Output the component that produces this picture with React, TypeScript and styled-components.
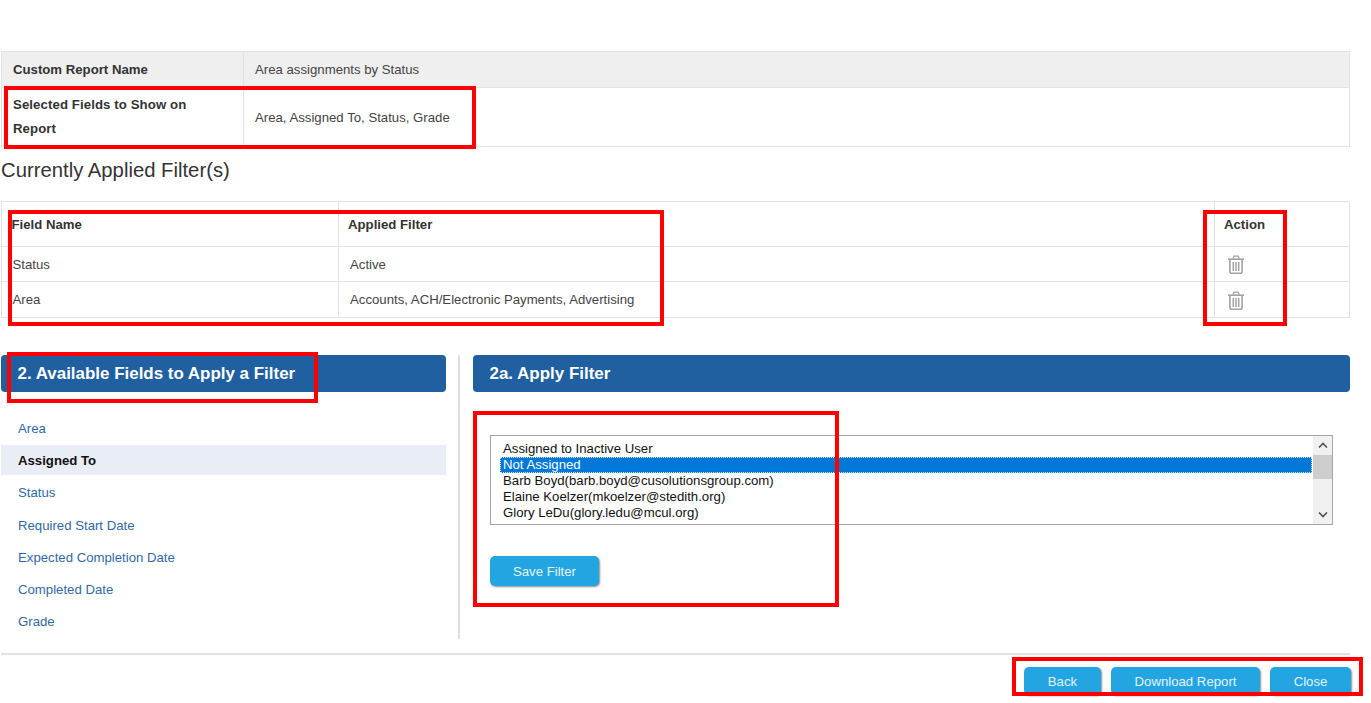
import React from 'react';
import styled, { createGlobalStyle } from 'styled-components';

const GlobalStyle = createGlobalStyle`
  html, body {
    margin: 0;
    padding: 0;
    background: #fff;
    font-family: "Liberation Sans", Arial, sans-serif;
    color: #333;
  }
`;

const Page = styled.div`
  position: relative;
  width: 1371px;
  height: 703px;
  overflow: hidden;
  box-sizing: border-box;
  padding: 51px 21px 0 1px;
`;

const Table = styled.table`
  width: 100%;
  border-collapse: collapse;
  table-layout: fixed;
  font-size: 13.2px;
  border: 1px solid #e3e3e3;
  color: #444;
`;

const Row = styled.tr<{ $height: number; $shaded?: boolean }>`
  height: ${(p) => p.$height}px;
  background: ${(p) => (p.$shaded ? '#efefef' : '#fff')};
`;

const Cell = styled.td<{ $pad?: number }>`
  border: 1px solid #e3e3e3;
  padding: 0 0 0 ${(p) => p.$pad ?? 11}px;
  vertical-align: middle;
`;

const LabelCell = styled(Cell)<{ $spaced?: boolean }>`
  font-weight: bold;
  color: #333;
  line-height: 24px;
  letter-spacing: ${(p) => (p.$spaced ? '0.1px' : 'normal')};
`;

const HeaderCell = styled(LabelCell)`
  padding-top: 1px;
`;

const Heading = styled.h2`
  margin: 0;
  height: 54px;
  padding-top: 10px;
  box-sizing: border-box;
  font-size: 20.3px;
  line-height: 27px;
  font-weight: normal;
  color: #333;
`;

const TrashButton = styled.button`
  display: block;
  margin: 2px 0 0;
  padding: 0;
  width: 20px;
  height: 20px;
  border: 0;
  background: none;
  color: #a3a3a3;
`;

const Columns = styled.div`
  display: grid;
  grid-template-columns: 445px 27px 1fr;
  margin-top: 37px;
  height: 284px;
`;

const Divider = styled.div`
  justify-self: center;
  width: 2px;
  margin-right: 1px;
  background: #e0e0e0;
`;

const PanelTitle = styled.div`
  height: 37px;
  box-sizing: border-box;
  padding-left: 16.5px;
  border-radius: 4px;
  background: #205fa0;
  color: #fff;
  font-size: 16.95px;
  font-weight: bold;
  line-height: 37px;
`;

const FieldList = styled.ul`
  list-style: none;
  margin: 21px 0 0;
  padding: 0;
`;

const FieldItem = styled.li<{ $active?: boolean }>`
  height: 30px;
  margin-bottom: 2.2px;
  padding-left: 17px;
  font-size: 13.2px;
  line-height: 31px;
  color: ${(p) => (p.$active ? '#111' : '#2f6aa8')};
  font-weight: ${(p) => (p.$active ? 'bold' : 'normal')};
  background: ${(p) => (p.$active ? '#e9edf5' : 'transparent')};
`;

const FilterBody = styled.div`
  padding: 43px 17px 0;
`;

const ListBox = styled.div`
  display: flex;
  height: 90px;
  box-sizing: border-box;
  border: 1px solid #a6a6a6;
  background: #fff;
`;

const Options = styled.div`
  flex: 1;
  padding: 5px 1px 0 9px;
  overflow: hidden;
`;

const Option = styled.div<{ $selected?: boolean }>`
  height: 16px;
  box-sizing: border-box;
  padding-left: 3px;
  font-size: 13.2px;
  line-height: 16px;
  color: ${(p) => (p.$selected ? '#fff' : '#111')};
  background: ${(p) => (p.$selected ? '#0078d7' : 'transparent')};
  outline: ${(p) => (p.$selected ? '1px dotted #cfe4f7' : 'none')};
  outline-offset: -1px;
`;

const ScrollTrack = styled.div`
  display: flex;
  flex-direction: column;
  width: 19px;
  background: #f0f0f0;
`;

const ScrollArrow = styled.div`
  flex: none;
  height: 19px;
  display: flex;
  align-items: center;
  justify-content: center;
  color: #505050;
`;

const ScrollThumb = styled.div`
  flex: none;
  height: 24px;
  background: #cdcdcd;
`;

const ScrollSpace = styled.div`
  flex: 1;
`;

const ActionButton = styled.button`
  height: 30px;
  box-sizing: border-box;
  padding: 0;
  border: 0;
  border-radius: 5px;
  background: #22a5e0;
  color: #e4f4fc;
  font-family: inherit;
  font-size: 13.2px;
  box-shadow: 1px 1px 2px rgba(0, 0, 0, 0.45);
`;

const SaveButton = styled(ActionButton)`
  display: block;
  width: 109px;
  margin-top: 31px;
`;

const Footer = styled.div`
  margin-top: 14px;
  border-top: 2px solid #e3e3e3;
  display: flex;
  justify-content: flex-end;
  gap: 10px;
  padding-top: 12px;
`;

const FooterButton = styled(ActionButton)<{ $width: number }>`
  width: ${(p) => p.$width}px;
  height: 28px;

  &:last-child {
    margin-right: -1px;
  }
`;

const Annotation = styled.div<{ $x: number; $y: number; $w: number; $h: number }>`
  position: absolute;
  left: ${(p) => p.$x}px;
  top: ${(p) => p.$y}px;
  width: ${(p) => p.$w}px;
  height: ${(p) => p.$h}px;
  box-sizing: border-box;
  border: 4px solid #ff0000;
  pointer-events: none;
`;

const TrashIcon = () => (
  <svg width="18" height="19" viewBox="0 0 18 19" fill="none" stroke="currentColor">
    <path d="M1 4.2h16" strokeWidth="1.6" />
    <path d="M6 3.8 7 1.2h4.2l1 2.6" strokeWidth="1.2" />
    <path d="M2.9 5v11.6c0 1 .7 1.7 1.7 1.7h8.8c1 0 1.7-.7 1.7-1.7V5" strokeWidth="1.6" />
    <path d="M6.3 7v9M9 7v9M11.7 7v9" strokeWidth="1.5" />
  </svg>
);

const Chevron = ({ up }: { up?: boolean }) => (
  <svg width="10" height="7" viewBox="0 0 10 7" fill="none" stroke="currentColor" strokeWidth="1.6">
    <path d={up ? 'M1 5.5 5 1.5l4 4' : 'M1 1.5l4 4 4-4'} />
  </svg>
);

const fields = [
  'Area',
  'Assigned To',
  'Status',
  'Required Start Date',
  'Expected Completion Date',
  'Completed Date',
  'Grade',
];

const options = [
  'Assigned to Inactive User',
  'Not Assigned',
  'Barb Boyd(barb.boyd@cusolutionsgroup.com)',
  'Elaine Koelzer(mkoelzer@stedith.org)',
  'Glory LeDu(glory.ledu@mcul.org)',
];

const filters = [
  { name: 'Status', value: 'Active' },
  { name: 'Area', value: 'Accounts, ACH/Electronic Payments, Advertising' },
];

const annotations = [
  { x: 4, y: 86, w: 472, h: 63 },
  { x: 8, y: 210, w: 656, h: 116 },
  { x: 1203, y: 210, w: 84, h: 116 },
  { x: 7, y: 352, w: 311, h: 51 },
  { x: 473, y: 411, w: 366, h: 196 },
  { x: 1012, y: 657, w: 351, h: 39 },
];

export default function App() {
  return (
    <Page>
      <GlobalStyle />
      <Table>
        <colgroup>
          <col style={{ width: 242 }} />
          <col />
        </colgroup>
        <tbody>
          <Row $height={36} $shaded>
            <LabelCell>Custom Report Name</LabelCell>
            <Cell>Area assignments by Status</Cell>
          </Row>
          <Row $height={59}>
            <LabelCell $spaced>
              Selected Fields to Show on
              <br />
              Report
            </LabelCell>
            <Cell>Area, Assigned To, Status, Grade</Cell>
          </Row>
        </tbody>
      </Table>

      <Heading>Currently Applied Filter(s)</Heading>

      <Table>
        <colgroup>
          <col style={{ width: 337 }} />
          <col style={{ width: 876 }} />
          <col />
        </colgroup>
        <tbody>
          <Row $height={45}>
            <HeaderCell $pad={9.5}>Field Name</HeaderCell>
            <HeaderCell $pad={9}>Applied Filter</HeaderCell>
            <HeaderCell $pad={9}>Action</HeaderCell>
          </Row>
          {filters.map((f, i) => (
            <Row key={f.name} $height={i === 0 ? 35 : 36}>
              <Cell $pad={10.5}>{f.name}</Cell>
              <Cell>{f.value}</Cell>
              <Cell>
                <TrashButton aria-label="Delete">
                  <TrashIcon />
                </TrashButton>
              </Cell>
            </Row>
          ))}
        </tbody>
      </Table>

      <Columns>
        <div>
          <PanelTitle>2. Available Fields to Apply a Filter</PanelTitle>
          <FieldList>
            {fields.map((f) => (
              <FieldItem key={f} $active={f === 'Assigned To'}>
                {f}
              </FieldItem>
            ))}
          </FieldList>
        </div>
        <Divider />
        <div>
          <PanelTitle>2a. Apply Filter</PanelTitle>
          <FilterBody>
            <ListBox>
              <Options>
                {options.map((o) => (
                  <Option key={o} $selected={o === 'Not Assigned'}>
                    {o}
                  </Option>
                ))}
              </Options>
              <ScrollTrack>
                <ScrollArrow>
                  <Chevron up />
                </ScrollArrow>
                <ScrollThumb />
                <ScrollSpace />
                <ScrollArrow>
                  <Chevron />
                </ScrollArrow>
              </ScrollTrack>
            </ListBox>
            <SaveButton>Save Filter</SaveButton>
          </FilterBody>
        </div>
      </Columns>

      <Footer>
        <FooterButton $width={77}>Back</FooterButton>
        <FooterButton $width={149}>Download Report</FooterButton>
        <FooterButton $width={81}>Close</FooterButton>
      </Footer>

      {annotations.map((a) => (
        <Annotation key={`${a.x}-${a.y}`} $x={a.x} $y={a.y} $w={a.w} $h={a.h} />
      ))}
    </Page>
  );
}
